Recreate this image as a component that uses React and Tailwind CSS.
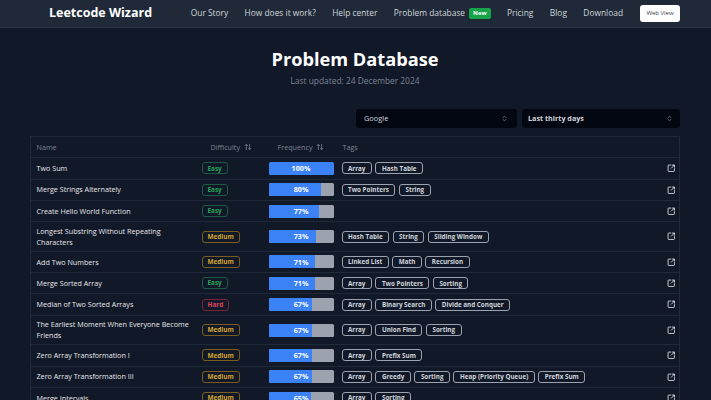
import { ArrowUpDown, ChevronsUpDown, SquareArrowOutUpRight } from 'lucide-react'

const problems = [
  { name: 'Two Sum', difficulty: 'Easy', frequency: 100, tags: ['Array', 'Hash Table'] },
  { name: 'Merge Strings Alternately', difficulty: 'Easy', frequency: 80, tags: ['Two Pointers', 'String'] },
  { name: 'Create Hello World Function', difficulty: 'Easy', frequency: 77, tags: [] },
  { name: 'Longest Substring Without Repeating Characters', difficulty: 'Medium', frequency: 73, tags: ['Hash Table', 'String', 'Sliding Window'] },
  { name: 'Add Two Numbers', difficulty: 'Medium', frequency: 71, tags: ['Linked List', 'Math', 'Recursion'] },
  { name: 'Merge Sorted Array', difficulty: 'Easy', frequency: 71, tags: ['Array', 'Two Pointers', 'Sorting'] },
  { name: 'Median of Two Sorted Arrays', difficulty: 'Hard', frequency: 67, tags: ['Array', 'Binary Search', 'Divide and Conquer'] },
  { name: 'The Earliest Moment When Everyone Become Friends', difficulty: 'Medium', frequency: 67, tags: ['Array', 'Union Find', 'Sorting'] },
  { name: 'Zero Array Transformation I', difficulty: 'Medium', frequency: 67, tags: ['Array', 'Prefix Sum'] },
  { name: 'Zero Array Transformation III', difficulty: 'Medium', frequency: 67, tags: ['Array', 'Greedy', 'Sorting', 'Heap (Priority Queue)', 'Prefix Sum'] },
  { name: 'Merge Intervals', difficulty: 'Medium', frequency: 65, tags: ['Array', 'Sorting'] },
]

const difficultyStyles = {
  Easy: 'border-[#1c5a45] text-[#22a35a]',
  Medium: 'border-[#7a5c1e] text-[#d4a72c]',
  Hard: 'border-[#7a2338] text-[#e0405a]',
}

const navLinks = ['Our Story', 'How does it work?', 'Help center']
const navLinksAfter = ['Pricing', 'Blog', 'Download']

function Navbar() {
  return (
    <nav className="h-[28px] bg-[#1f2937] border-b border-[#2b3544] pl-[49px] pr-[31px] flex items-center justify-between whitespace-nowrap">
      <span className="text-[12.5px] font-bold text-white">Leetcode Wizard</span>
      <div className="flex items-center text-[8.4px] text-[#d1d5db]">
        <div className="flex items-center gap-[16.4px]">
          {navLinks.map((link) => (
            <span key={link}>{link}</span>
          ))}
          <span className="flex items-center gap-[4px]">
            Problem database
            <span className="bg-[#16a34a] text-white text-[6px] font-bold rounded-[2px] px-[4px] h-[11px] flex items-center">New</span>
          </span>
          {navLinksAfter.map((link) => (
            <span key={link}>{link}</span>
          ))}
        </div>
        <span className="ml-[17px] bg-white text-[#374151] text-[6px] font-medium rounded-[3px] w-[40px] h-[17px] flex items-center justify-center">Web View</span>
      </div>
    </nav>
  )
}

function Select({ label, className }) {
  return (
    <div className={`h-[19px] bg-[#030712] rounded-[3px] flex items-center justify-between text-[#d1d5db] ${className}`}>
      {label}
      <ChevronsUpDown className="w-[7px] h-[7px] text-[#9ca3af]" />
    </div>
  )
}

function Row({ problem }) {
  return (
    <tr className="border-t border-[#1f2937]">
      <td className="pl-[5.5px] pr-[7.5px] py-[3.5px] text-[7.2px] leading-[10.7px] text-[#e5e7eb]">{problem.name}</td>
      <td className="py-[3.7px]">
        <span className={`flex w-fit items-center h-[12px] px-[5px] rounded-[3px] border text-[6.4px] font-bold ${difficultyStyles[problem.difficulty]}`}>
          {problem.difficulty}
        </span>
      </td>
      <td className="py-[3.7px]">
        <div className="relative w-[65px] h-[13px] rounded-[1.5px] overflow-hidden bg-[#9ca3af]">
          <div className="h-full bg-[#3b82f6]" style={{ width: `${problem.frequency}%` }} />
          <span className="absolute inset-0 flex items-center justify-center text-[7.2px] font-bold text-white">{problem.frequency}%</span>
        </div>
      </td>
      <td className="py-[3.7px]">
        <div className="flex gap-[3.5px]">
          {problem.tags.map((tag) => (
            <span key={tag} className="flex items-center h-[12px] px-[5.5px] rounded-[3px] border border-[#9ca3af] text-[6.3px] font-bold text-[#d1d5db] whitespace-nowrap">
              {tag}
            </span>
          ))}
        </div>
      </td>
      <td className="pr-[4px]">
        <SquareArrowOutUpRight className="w-[8.5px] h-[8.5px] text-[#e5e7eb] ml-auto" strokeWidth={2.4} />
      </td>
    </tr>
  )
}

export default function App() {
  return (
    <div className="h-[400px] overflow-hidden bg-[#111827] font-['Open_Sans',sans-serif]">
      <Navbar />
      <div className="pl-[30px] pr-[31px]">
        <h1 className="mt-[18px] text-center text-[18.2px] leading-[27px] font-bold text-white">Problem Database</h1>
        <p className="mt-[1.5px] text-center text-[8.4px] leading-[12px] text-[#7b8494]">Last updated: 24 December 2024</p>
        <div className="mt-[22.5px] flex justify-end gap-[5px]">
          <Select label={<span className="text-[7.4px]">Google</span>} className="w-[161px] pl-[8px] pr-[9px]" />
          <Select label={<span className="text-[7.2px] font-bold">Last thirty days</span>} className="w-[158px] pl-[6px] pr-[7px]" />
        </div>
        <table className="mt-[8px] w-full table-fixed border border-[#1f2937] border-collapse">
          <colgroup>
            <col className="w-[171px]" />
            <col className="w-[67px]" />
            <col className="w-[73px]" />
            <col />
            <col className="w-[30px]" />
          </colgroup>
          <thead>
            <tr className="h-[21.2px] text-[7.2px] text-[#7b8494] text-left">
              <th className="pl-[5.5px] font-normal">Name</th>
              <th className="pl-[9px] font-normal">
                <span className="flex items-center gap-[4px]">Difficulty <ArrowUpDown className="w-[8px] h-[8px]" strokeWidth={2.4} /></span>
              </th>
              <th className="pl-[9px] font-normal">
                <span className="flex items-center gap-[4px]">Frequency <ArrowUpDown className="w-[8px] h-[8px]" strokeWidth={2.4} /></span>
              </th>
              <th className="pl-[1px] font-normal">Tags</th>
              <th />
            </tr>
          </thead>
          <tbody>
            {problems.map((problem) => (
              <Row key={problem.name} problem={problem} />
            ))}
          </tbody>
        </table>
      </div>
    </div>
  )
}
